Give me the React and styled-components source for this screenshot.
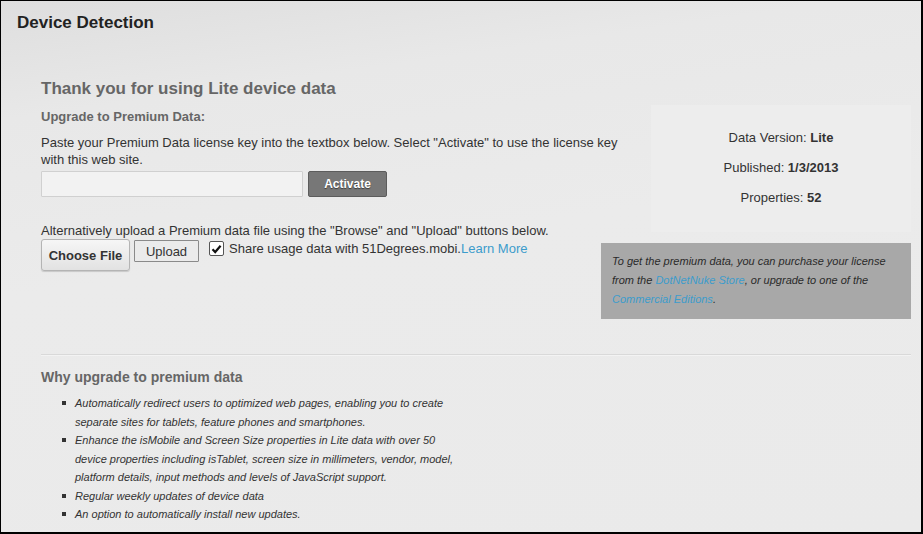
import React from "react";
import styled, { createGlobalStyle } from "styled-components";

const Global = createGlobalStyle`
  html, body { margin: 0; padding: 0; }
  body { font-family: "Liberation Sans", Arial, sans-serif; color: #333; }
`;

const Frame = styled.div`
  box-sizing: border-box;
  width: 923px; height: 534px; overflow: hidden;
  border-style: solid; border-color: #000;
  border-width: 1px 2px 2px 1px;
  background: linear-gradient(172deg, #dedede 0%, #e8e8e8 18%, #ebebeb 45%, #eaeaea 100%);
`;

const Title = styled.h2`
  margin: 0; padding: 12px 16px 0;
  font-size: 17px; line-height: 20px; font-weight: bold; color: #222;
`;

const Body = styled.div`
  padding: 0 10px 0 40px;
`;

const Top = styled.div`
  display: grid;
  grid-template-columns: 560px 310px;
  margin-top: 46px;
`;

const Left = styled.div`
  min-width: 0;
`;

const Lead = styled.h3`
  margin: 0; font-size: 17px; line-height: 20px; font-weight: bold; color: #666;
`;

const SubHead = styled.h4`
  margin: 10px 0 0; font-size: 13px; line-height: 16px; font-weight: bold; color: #666;
`;

const Para = styled.p`
  margin: ${(p) => p.$top}px 0 0; width: 595px;
  font-size: 13px; line-height: 17px; color: #333;
`;

const Row = styled.div`
  display: flex; align-items: flex-start;
  margin-top: ${(p) => p.$top || 0}px;
`;

const KeyInput = styled.input`
  box-sizing: border-box; width: 262px; height: 26px; margin: 0;
  border: 1px solid #d0d0d0; background: #f2f2f2; border-radius: 1px;
`;

const Activate = styled.button`
  box-sizing: border-box; width: 79px; height: 26px; margin: 0 0 0 5px;
  background: #777; border: 1px solid #5c5c5c; border-radius: 2px;
  color: #fff; font-family: inherit; font-size: 12px; font-weight: bold;
  text-shadow: 0 1px 1px rgba(0,0,0,0.5);
`;

const ChooseFile = styled.button`
  box-sizing: border-box; width: 89px; height: 32px; margin: 0; padding: 0;
  white-space: nowrap;
  background: linear-gradient(#f6f6f6, #e2e2e2);
  border: 1px solid #b4b4b4; border-radius: 3px;
  box-shadow: 0 1px 1px rgba(0,0,0,0.15);
  color: #333; font-family: inherit; font-size: 13px; font-weight: bold;
`;

const Upload = styled.button`
  box-sizing: border-box; width: 65px; height: 22px; margin: 1px 0 0 4px;
  background: #ebebeb; border: 1px solid #8a8a8a; border-radius: 1px;
  color: #333; font-family: inherit; font-size: 13px; padding: 0;
`;

const Check = styled.span`
  box-sizing: border-box; width: 15px; height: 15px; margin: 2px 0 0 10px;
  display: inline-flex; align-items: center; justify-content: center;
  background: #fff; border: 1px solid #555; border-radius: 2px;
`;

const Share = styled.span`
  margin: 2px 0 0 5px; font-size: 13px; line-height: 16px; color: #333;
  white-space: nowrap;
`;

const Link = styled.a`
  color: #3c9ccc; text-decoration: none; cursor: pointer;
`;

const Right = styled.div`
  margin-top: 26px;
`;

const Stats = styled.div`
  margin-left: 50px; width: 260px;
  padding: 18px 0 19px; background: #ededed;
  text-align: center; font-size: 13px; line-height: 30px; color: #333;
  b { font-weight: bold; }
`;

const Note = styled.div`
  margin-top: 11px; padding: 9px 11px 10px;
  background: #a8a8a8; color: #2a2a2a;
  font-size: 11px; line-height: 19px; font-style: italic;
`;

const Divider = styled.hr`
  margin: 35px 0 0; height: 0; border: 0;
  border-top: 1px solid #d9d9d9; border-bottom: 1px solid #f3f3f3;
`;

const WhyHead = styled.h4`
  margin: 13px 0 0; font-size: 14px; line-height: 17px; font-weight: bold; color: #666;
`;

const List = styled.ul`
  margin: 8px 0 0; padding: 0 0 0 34px; width: 385px;
  list-style: none;
`;

const Item = styled.li`
  position: relative;
  font-size: 11px; line-height: 18.5px; font-style: italic; color: #333;
  &::before {
    content: ""; position: absolute; left: -13px; top: 7px;
    width: 4px; height: 4px; background: #333;
  }
`;

const reasons = [
  "Automatically redirect users to optimized web pages, enabling you to create separate sites for tablets, feature phones and smartphones.",
  "Enhance the isMobile and Screen Size properties in Lite data with over 50 device properties including isTablet, screen size in millimeters, vendor, model, platform details, input methods and levels of JavaScript support.",
  "Regular weekly updates of device data",
  "An option to automatically install new updates.",
];

export default function App() {
  return (
    <Frame>
      <Global />
      <Title>Device Detection</Title>
      <Body>
        <Top>
          <Left>
            <Lead>Thank you for using Lite device data</Lead>
            <SubHead>Upgrade to Premium Data:</SubHead>
            <Para $top={9}>
              Paste your Premium Data license key into the textbox below. Select "Activate" to use the license key with this web site.
            </Para>
            <Row $top={3}>
              <KeyInput type="text" />
              <Activate>Activate</Activate>
            </Row>
            <Para $top={25}>
              Alternatively upload a Premium data file using the "Browse" and "Upload" buttons below.
            </Para>
            <Row $top={0}>
              <ChooseFile>Choose File</ChooseFile>
              <Upload>Upload</Upload>
              <Check>
                <svg width="11" height="10" viewBox="0 0 11 10">
                  <path d="M1.5 5.2 L4.2 8 L9.6 1.8" fill="none" stroke="#111" strokeWidth="2.2" />
                </svg>
              </Check>
              <Share>
                Share usage data with 51Degrees.mobi.<Link>Learn More</Link>
              </Share>
            </Row>
          </Left>
          <Right>
            <Stats>
              <div>Data Version: <b>Lite</b></div>
              <div>Published: <b>1/3/2013</b></div>
              <div>Properties: <b>52</b></div>
            </Stats>
            <Note>
              To get the premium data, you can purchase your license from the <Link>DotNetNuke Store</Link>, or upgrade to one of the <Link>Commercial Editions</Link>.
            </Note>
          </Right>
        </Top>
        <Divider />
        <WhyHead>Why upgrade to premium data</WhyHead>
        <List>
          {reasons.map((r) => (
            <Item key={r}>{r}</Item>
          ))}
        </List>
      </Body>
    </Frame>
  );
}
